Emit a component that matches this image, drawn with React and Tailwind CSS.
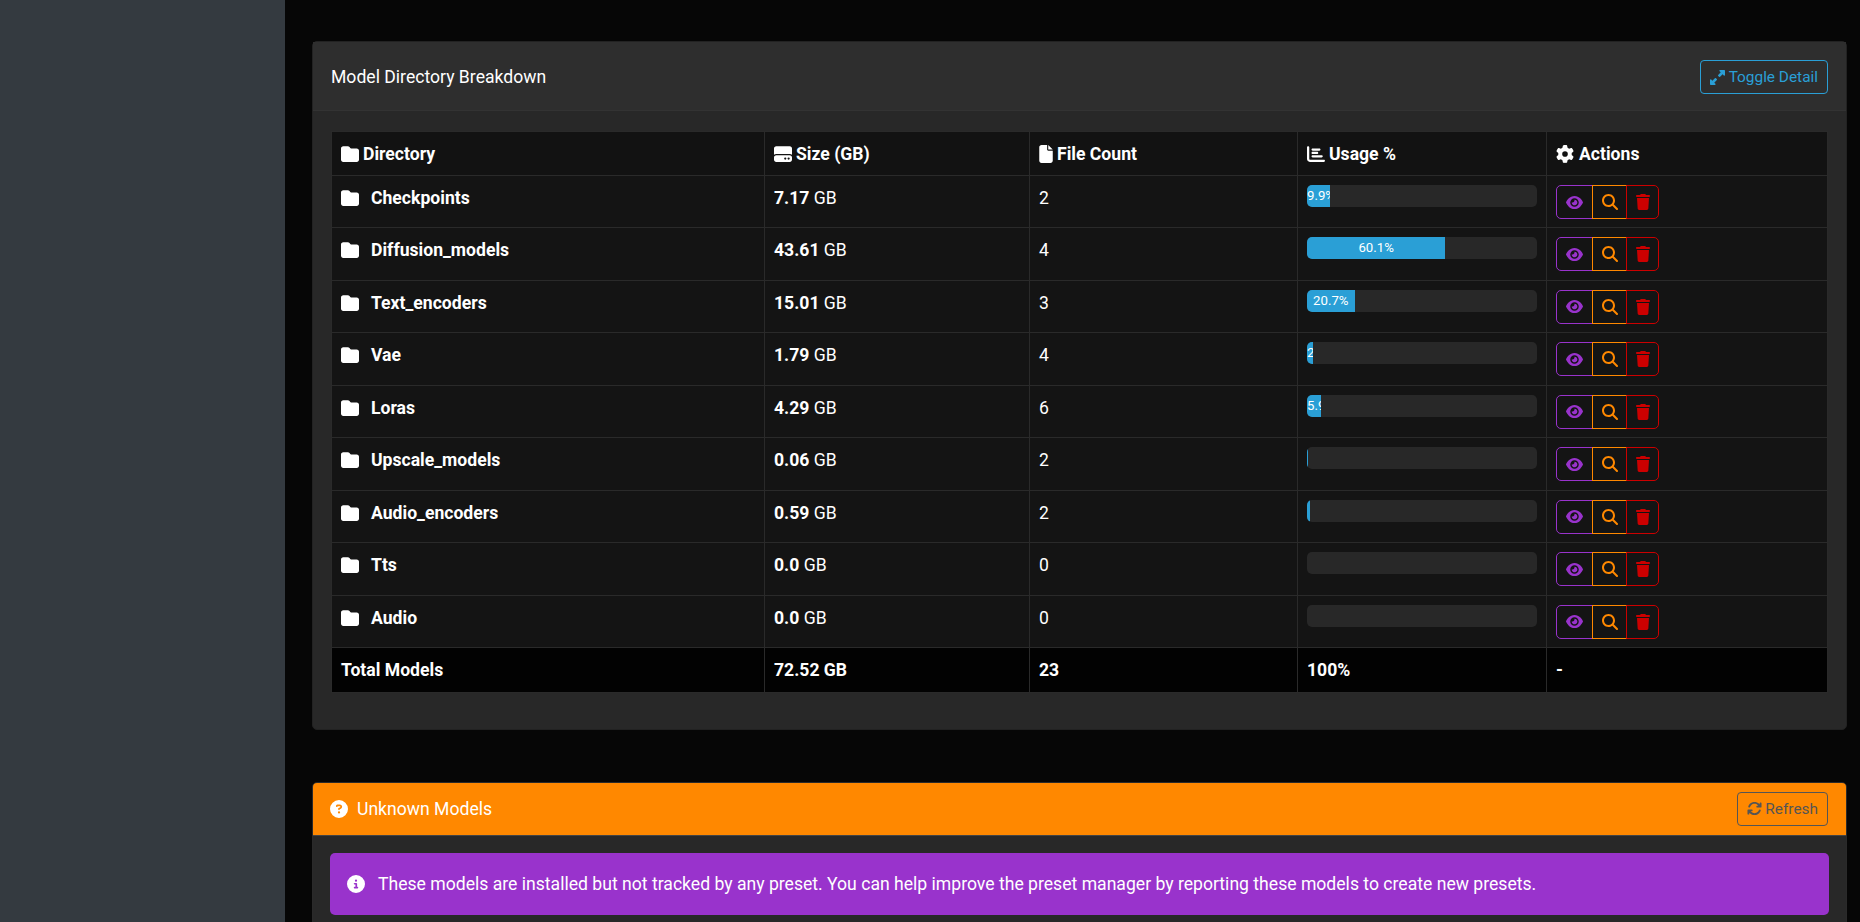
import {
  FaFolder,
  FaHardDrive,
  FaFile,
  FaChartBar,
  FaGear,
  FaEye,
  FaMagnifyingGlass,
  FaTrash,
  FaUpRightAndDownLeftFromCenter,
  FaArrowsRotate,
  FaCircleQuestion,
  FaCircleInfo,
} from 'react-icons/fa6'

const rows = [
  { name: 'Checkpoints', size: '7.17', files: 2, usage: 9.9, label: '9.9%' },
  { name: 'Diffusion_models', size: '43.61', files: 4, usage: 60.1, label: '60.1%' },
  { name: 'Text_encoders', size: '15.01', files: 3, usage: 20.7, label: '20.7%' },
  { name: 'Vae', size: '1.79', files: 4, usage: 2.5, label: '2.5%' },
  { name: 'Loras', size: '4.29', files: 6, usage: 5.9, label: '5.9%' },
  { name: 'Upscale_models', size: '0.06', files: 2, usage: 0.5, label: '' },
  { name: 'Audio_encoders', size: '0.59', files: 2, usage: 1.1, label: '' },
  { name: 'Tts', size: '0.0', files: 0, usage: 0, label: '' },
  { name: 'Audio', size: '0.0', files: 0, usage: 0, label: '' },
]

const cellClass = 'border border-[#2a2a2a] px-[9px] align-top'

const HeadCell = ({ icon, children }) => (
  <th className={`${cellClass} pt-[10px] pb-[9px] text-left font-bold text-white`}>
    <span className="flex items-center gap-[4px] h-6">
      {icon}
      {children}
    </span>
  </th>
)

const UsageBar = ({ usage, label }) => (
  <div className="h-[22px] w-[230px] rounded-[5px] bg-[#282828] overflow-hidden">
    <div
      className="h-full bg-[#2a9fd6] text-white text-[13.2px] leading-[22px] text-center whitespace-nowrap overflow-hidden"
      style={{ width: `${usage}%` }}
    >
      {label}
    </div>
  </div>
)

const ActionButtons = () => (
  <div className="flex h-[34px] w-[103px]">
    <button className="w-[37px] flex items-center justify-center border border-[#9933cc] rounded-l-[5px] text-[#9933cc]">
      <FaEye size={17} />
    </button>
    <button className="w-[35px] -ml-px flex items-center justify-center border border-[#ff8800] text-[#ff8800]">
      <FaMagnifyingGlass size={16} />
    </button>
    <button className="w-[33px] -ml-px flex items-center justify-center border border-[#cc0000] rounded-r-[5px] text-[#cc0000]">
      <FaTrash size={16} />
    </button>
  </div>
)

const App = () => {
  return (
    <div className="flex h-screen overflow-hidden bg-[#060606] text-white text-[17.6px] leading-6 font-['Roboto',sans-serif]">
      <aside className="w-[285px] shrink-0 bg-[#343a40]" />

      <main className="flex-1 min-w-0 pl-[27px] pr-[13px] pt-[41px]">
        <section className="rounded-[5px] bg-[#282828] border border-[#222222]">
          <header className="flex items-start justify-between bg-[#2e2e2e] border-b border-[#333333] h-[69px] pl-[18px] pr-[18px] pt-[18px]">
            <h2 className="text-[17.6px] leading-[34px]">Model Directory Breakdown</h2>
            <button className="flex items-center gap-[4px] h-[34px] px-[9px] rounded-[4px] border border-[#2a9fd6] text-[#2a9fd6] text-[15.4px]">
              <FaUpRightAndDownLeftFromCenter size={15} />
              Toggle Detail
            </button>
          </header>

          <div className="pl-[18px] pr-[18px] pt-[20px] pb-[36px]">
            <table className="w-[1496px] table-fixed border-collapse">
              <colgroup>
                <col className="w-[433px]" />
                <col className="w-[265px]" />
                <col className="w-[268px]" />
                <col className="w-[249px]" />
                <col className="w-[281px]" />
              </colgroup>
              <thead className="bg-[#121212]">
                <tr className="h-[44px]">
                  <HeadCell icon={<FaFolder size={18} />}>Directory</HeadCell>
                  <HeadCell icon={<FaHardDrive size={18} />}>Size (GB)</HeadCell>
                  <HeadCell icon={<FaFile className="w-[14px] h-[18px]" />}>File Count</HeadCell>
                  <HeadCell icon={<FaChartBar size={18} />}>Usage %</HeadCell>
                  <HeadCell icon={<FaGear size={18} className="mr-px" />}>Actions</HeadCell>
                </tr>
              </thead>
              <tbody className="bg-[#141414]">
                {rows.map((row) => (
                  <tr key={row.name} className="h-[52.44px]">
                    <td className={`${cellClass} py-[10px] font-bold`}>
                      <span className="flex items-center gap-[12px] h-6">
                        <FaFolder size={18} />
                        {row.name}
                      </span>
                    </td>
                    <td className={`${cellClass} py-[10px]`}>
                      <strong className="font-bold">{row.size}</strong> GB
                    </td>
                    <td className={`${cellClass} py-[10px]`}>{row.files}</td>
                    <td className={`${cellClass} pt-[9px]`}>
                      <UsageBar usage={row.usage} label={row.label} />
                    </td>
                    <td className={`${cellClass} pt-[9px]`}>
                      <ActionButtons />
                    </td>
                  </tr>
                ))}
              </tbody>
              <tfoot className="bg-[#020202] font-bold">
                <tr className="h-[45px]">
                  <td className={`${cellClass} py-[10px]`}>Total Models</td>
                  <td className={`${cellClass} py-[10px]`}>72.52 GB</td>
                  <td className={`${cellClass} py-[10px]`}>23</td>
                  <td className={`${cellClass} py-[10px]`}>100%</td>
                  <td className={`${cellClass} py-[10px]`}>-</td>
                </tr>
              </tfoot>
            </table>
          </div>
        </section>

        <section className="mt-[52px] rounded-[5px] bg-[#282828] border border-[#2a2a2a] overflow-hidden">
          <header className="flex items-center justify-between bg-[#ff8800] border-b border-[#444444] h-[53px] pl-[17px] pr-[18px]">
            <h2 className="flex items-center gap-[9px] text-[17.6px] pt-px">
              <FaCircleQuestion size={18} />
              Unknown Models
            </h2>
            <button className="flex items-center gap-[3px] h-[34px] px-[9px] rounded-[4px] border border-[#555555] text-[#555555] text-[15.4px]">
              <FaArrowsRotate size={15} />
              Refresh
            </button>
          </header>
          <div className="px-[17px] pt-[17px] pb-[17px]">
            <div className="flex items-center gap-[13px] h-[62px] rounded-[5px] bg-[#9933cc] pl-[17px] pt-px">
              <FaCircleInfo size={18} />
              These models are installed but not tracked by any preset. You can help improve the preset manager by reporting these models to create new presets.
            </div>
          </div>
        </section>
      </main>
    </div>
  )
}

export default App
